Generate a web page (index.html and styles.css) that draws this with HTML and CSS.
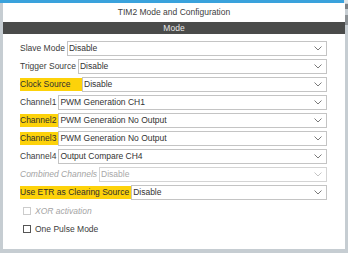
FILE: index.html
```html
<!DOCTYPE html>
<html lang="en">
<head>
  <meta charset="UTF-8" />
  <title>TIM2 Mode and Configuration</title>
  <link rel="stylesheet" href="styles.css">
</head>
<body>
  <div class="topbar"><div class="topbar-blue"></div></div>
  <div class="frame">
    <div class="gutter"></div>
    <div class="panel">
      <div class="title">TIM2 Mode and Configuration</div>
      <div class="section">Mode</div>
      <div class="form">
        <div class="row">
          <span class="label">Slave Mode</span>
          <div class="select"><span>Disable</span><svg class="chev" width="8" height="5" viewBox="0 0 8 5"><path d="M0.5 0.5 L4 4 L7.5 0.5" /></svg></div>
        </div>
        <div class="row">
          <span class="label">Trigger Source</span>
          <div class="select"><span>Disable</span><svg class="chev" width="8" height="5" viewBox="0 0 8 5"><path d="M0.5 0.5 L4 4 L7.5 0.5" /></svg></div>
        </div>
        <div class="row">
          <span class="label mark clock">Clock Source</span>
          <div class="select"><span>Disable</span><svg class="chev" width="8" height="5" viewBox="0 0 8 5"><path d="M0.5 0.5 L4 4 L7.5 0.5" /></svg></div>
        </div>
        <div class="row">
          <span class="label">Channel1</span>
          <div class="select"><span>PWM Generation CH1</span><svg class="chev" width="8" height="5" viewBox="0 0 8 5"><path d="M0.5 0.5 L4 4 L7.5 0.5" /></svg></div>
        </div>
        <div class="row">
          <span class="label mark">Channel2</span>
          <div class="select"><span>PWM Generation No Output</span><svg class="chev" width="8" height="5" viewBox="0 0 8 5"><path d="M0.5 0.5 L4 4 L7.5 0.5" /></svg></div>
        </div>
        <div class="row">
          <span class="label mark">Channel3</span>
          <div class="select"><span>PWM Generation No Output</span><svg class="chev" width="8" height="5" viewBox="0 0 8 5"><path d="M0.5 0.5 L4 4 L7.5 0.5" /></svg></div>
        </div>
        <div class="row">
          <span class="label">Channel4</span>
          <div class="select"><span>Output Compare CH4</span><svg class="chev" width="8" height="5" viewBox="0 0 8 5"><path d="M0.5 0.5 L4 4 L7.5 0.5" /></svg></div>
        </div>
        <div class="row disabled">
          <span class="label">Combined Channels</span>
          <div class="select"><span>Disable</span><svg class="chev" width="8" height="5" viewBox="0 0 8 5"><path d="M0.5 0.5 L4 4 L7.5 0.5" /></svg></div>
        </div>
        <div class="row">
          <span class="label mark">Use ETR as Clearing Source</span>
          <div class="select"><span>Disable</span><svg class="chev" width="8" height="5" viewBox="0 0 8 5"><path d="M0.5 0.5 L4 4 L7.5 0.5" /></svg></div>
        </div>
        <div class="row check disabled">
          <span class="box"></span>
          <span class="check-label">XOR activation</span>
        </div>
        <div class="row check">
          <span class="box"></span>
          <span class="check-label">One Pulse Mode</span>
        </div>
      </div>
    </div>
    <div class="scroll">
      <div class="scroll-arrow"></div>
      <div class="scroll-thumb"></div>
    </div>
  </div>
</body>
</html>
```

FILE: styles.css
```css
body {
  margin: 0;
  width: 348px;
  height: 253px;
  overflow: hidden;
  background-color: #c6cdd2;
  font-family: "Liberation Sans", Arial, sans-serif;
  font-size: 8.5px;
  color: #3a3a3a;
}
.topbar {
  height: 3px;
  background-color: #dfe3e6;
}
.topbar-blue {
  width: 344px;
  height: 3px;
  background-color: #3aa2dc;
}
.frame {
  display: flex;
  height: 246px;
}
.gutter {
  width: 3px;
}
.panel {
  width: 342px;
  background-color: #ffffff;
  display: flex;
  flex-direction: column;
}
.title {
  height: 19px;
  line-height: 19px;
  text-align: center;
  font-size: 8.5px;
  color: #404040;
}
.section {
  height: 12px;
  line-height: 12px;
  text-align: center;
  background-color: #4a4b4a;
  color: #e8e8e8;
}
.form {
  display: flex;
  flex-direction: column;
  gap: 3px;
  padding: 7px 18px 0 17px;
}
.row {
  display: flex;
  align-items: center;
  height: 15px;
}
.label {
  height: 13px;
  line-height: 13px;
  padding-right: 2px;
  white-space: nowrap;
  color: #3c3c3c;
}
.label.mark {
  background-color: #fdd20a;
  color: #2e2e2e;
}
.label.clock {
  width: 61px;
  padding-right: 1px;
}
.select {
  flex: 1;
  height: 13px;
  line-height: 13px;
  border: 1px solid #c4c4c4;
  display: flex;
  align-items: center;
  justify-content: space-between;
  padding: 0 4px 0 1px;
  color: #333333;
}
.chev path {
  fill: none;
  stroke: #7a7a7a;
  stroke-width: 1;
}
.disabled .label {
  font-style: italic;
  color: #a4a4a4;
}
.disabled .select {
  color: #a8a8a8;
  border-color: #d4d4d4;
}
.disabled .chev path {
  stroke: #c4c4c4;
}
.check {
  padding-left: 3px;
  gap: 4px;
}
.box {
  width: 6px;
  height: 6px;
  border: 1px solid #555555;
}
.check-label {
  color: #3c3c3c;
}
.check.disabled .box {
  border-color: #cccccc;
}
.check.disabled .check-label {
  font-style: italic;
  color: #a4a4a4;
}
.scroll {
  width: 3px;
  display: flex;
  flex-direction: column;
}
.scroll-arrow {
  height: 5px;
  margin-top: 1px;
  background-color: #7d8286;
}
.scroll-thumb {
  height: 10px;
  margin-top: 6px;
  background-color: #8e9397;
}
```
